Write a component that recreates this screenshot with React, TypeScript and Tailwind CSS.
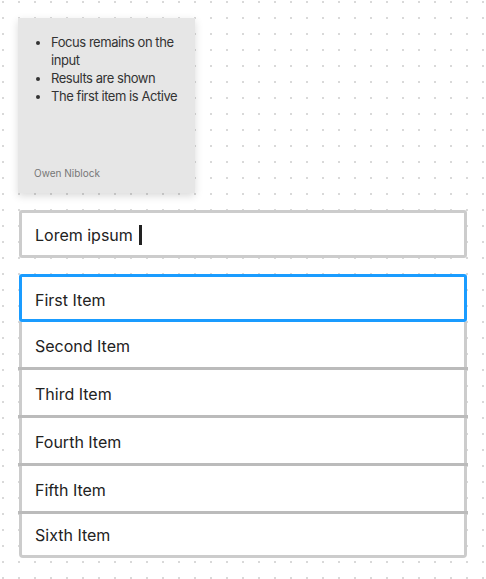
const notes = [
  'Focus remains on the input',
  'Results are shown',
  'The first item is Active',
]

const items = ['Second Item', 'Third Item', 'Fourth Item', 'Fifth Item']

export default function App() {
  return (
    <div className="min-h-[579px] w-full bg-white bg-[radial-gradient(circle,#d9d9d9_1px,transparent_1.2px)] bg-[length:16px_16px] bg-[position:-5px_-6px] font-['Inter',sans-serif] text-[#222]">
      <div className="flex w-[486px] flex-col px-[19px] pt-[18px]">
        {/* sticky note */}
        <div className="-ml-px flex h-[175px] w-[177px] flex-col justify-between bg-[#e6e6e6] pb-[14px] pl-[16px] pr-[8px] pt-[15px] shadow-[0_3px_8px_rgba(0,0,0,0.15)]">
          <ul className="list-disc pl-[17px] text-[13px] leading-[18px] tracking-[-0.45px] text-[#333]">
            {notes.map((n) => (
              <li key={n}>{n}</li>
            ))}
          </ul>
          <div className="text-[10px] leading-[12px] text-[#777]">Owen Niblock</div>
        </div>

        {/* search input */}
        <div className="mt-[17px] flex h-[48px] items-center rounded-[3px] border-[3px] border-[#cccccc] bg-white px-[13px] pt-px text-[16px]">
          <span>Lorem ipsum</span>
          <span className="ml-[6px] h-[20px] w-[3px] bg-[#222]" />
        </div>

        {/* results */}
        <div className="mt-[16px] flex flex-col text-[16px]">
          <div className="flex h-[48px] items-center rounded-[3px] border-[3px] border-[#1a9cff] bg-white px-[13px] pt-[3px]">
            First Item
          </div>
          {items.map((item) => (
            <div
              key={item}
              className="-mx-px flex h-[48px] items-center border-b-[3px] border-b-[#bbbbbb] px-px"
            >
              <div className="flex h-full w-full items-center border-x-[3px] border-[#cccccc] bg-white px-[13px] pt-[3px]">
                {item}
              </div>
            </div>
          ))}
          <div className="flex h-[44px] items-center rounded-b-[4px] border-x-[3px] border-b-[3px] border-[#cccccc] bg-white px-[13px]">
            Sixth Item
          </div>
        </div>
      </div>
    </div>
  )
}
